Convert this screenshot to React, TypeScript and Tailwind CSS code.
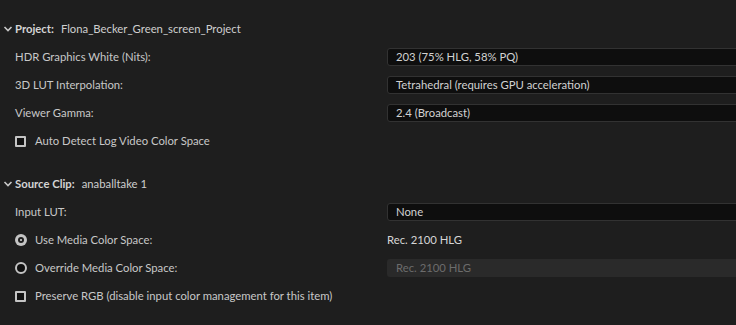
import React from 'react';

function Chevron() {
  return (
    <svg width="10" height="10" viewBox="0 0 10 10" className="mr-[2px] shrink-0">
      <path d="M1.5 3 L5 6.5 L8.5 3" fill="none" stroke="#c8c8c8" strokeWidth="1.6" />
    </svg>
  );
}

function Checkbox() {
  return <span className="w-[11px] h-[11px] border-2 border-[#c4c4c4] bg-[#121212] rounded-[1px] shrink-0" />;
}

function Radio({ on }: { on?: boolean }) {
  return on ? (
    <span className="w-[12px] h-[12px] rounded-full bg-[#c4c4c4] flex items-center justify-center shrink-0">
      <span className="w-[6px] h-[6px] rounded-full bg-[#1e1e1e] flex items-center justify-center">
        <span className="w-[2px] h-[2px] rounded-full bg-[#dcdcdc]" />
      </span>
    </span>
  ) : (
    <span className="w-[12px] h-[12px] rounded-full border-2 border-[#c4c4c4] bg-[#101010] shrink-0" />
  );
}

function Field({ value, disabled }: { value: string; disabled?: boolean }) {
  return (
    <div
      className={
        disabled
          ? 'flex-1 -mr-[40px] h-[18px] rounded-[3px] bg-[#2a2a2a] text-[#6c6c6c] pl-[9px] flex items-center'
          : 'flex-1 -mr-[40px] h-[18px] rounded-[3px] bg-[#0e0e0e] border border-[#323232] text-[#d2d2d2] pl-[8px] flex items-center'
      }
    >
      {value}
    </div>
  );
}

function Row({ label, children }: { label: React.ReactNode; children?: React.ReactNode }) {
  return (
    <div className="h-[28px] flex items-center">
      <div className="w-[387px] shrink-0 pl-[15px] flex items-center whitespace-nowrap">{label}</div>
      {children}
    </div>
  );
}

function Header({ title, value }: { title: string; value: string }) {
  return (
    <div className="h-[28px] flex items-center pl-[3px]">
      <Chevron />
      <span className="font-bold text-[#d4d4d4]">{title}</span>
      <span className="ml-[7px] text-[#cfcfcf]">{value}</span>
    </div>
  );
}

export default function App() {
  return (
    <div
      className="w-[736px] h-[325px] overflow-hidden bg-[#1e1e1e] text-[#c8c8c8] text-[11.3px] pt-[15px]"
      style={{ fontFamily: 'Lato, "Open Sans", sans-serif' }}
    >
      <Header title="Project:" value="Flona_Becker_Green_screen_Project" />
      <Row label="HDR Graphics White (Nits):">
        <Field value="203 (75% HLG, 58% PQ)" />
      </Row>
      <Row label="3D LUT Interpolation:">
        <Field value="Tetrahedral (requires GPU acceleration)" />
      </Row>
      <Row label="Viewer Gamma:">
        <Field value="2.4 (Broadcast)" />
      </Row>
      <Row
        label={
          <>
            <Checkbox />
            <span className="ml-[9px]">Auto Detect Log Video Color Space</span>
          </>
        }
      />

      <div className="h-[15px]" />
      <Header title="Source Clip:" value="anaballtake 1" />
      <Row label="Input LUT:">
        <Field value="None" />
      </Row>
      <Row
        label={
          <>
            <Radio on />
            <span className="ml-[8px]">Use Media Color Space:</span>
          </>
        }
      >
        <div className="flex-1 text-[#d6d6d6]">Rec. 2100 HLG</div>
      </Row>
      <Row
        label={
          <>
            <Radio />
            <span className="ml-[8px]">Override Media Color Space:</span>
          </>
        }
      >
        <Field value="Rec. 2100 HLG" disabled />
      </Row>
      <Row
        label={
          <>
            <Checkbox />
            <span className="ml-[9px]">Preserve RGB (disable input color management for this item)</span>
          </>
        }
      />
    </div>
  );
}
